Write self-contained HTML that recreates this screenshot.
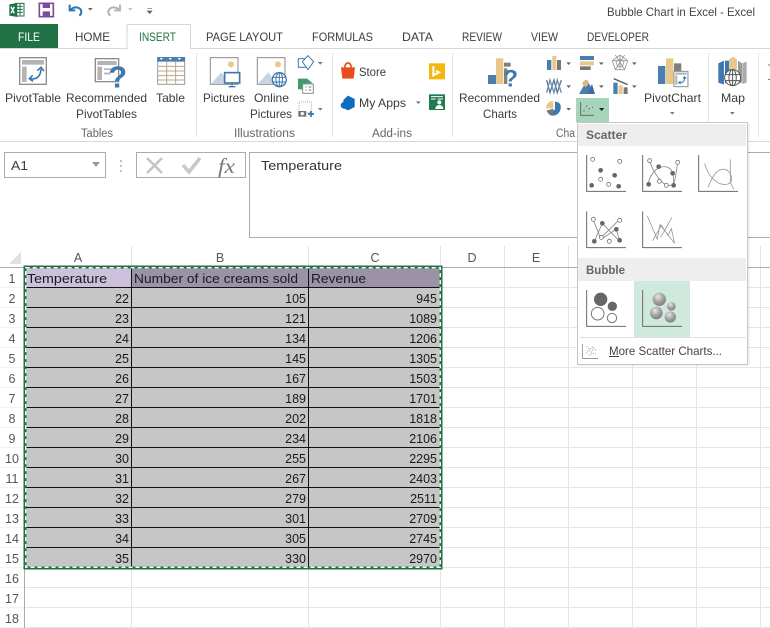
<!DOCTYPE html>
<html><head><meta charset="utf-8"><title>Bubble Chart in Excel - Excel</title>
<style>
html,body{margin:0;padding:0;background:#fff;width:770px;height:628px;overflow:hidden}
svg{display:block;font-family:"Liberation Sans",sans-serif;filter:blur(.3px)}
text{fill:#3c3c3c;font-size:12px}
.c text{fill:#1a1a1a;font-size:13px}
.c .n text{font-size:12.5px}
.h text{fill:#555;font-size:12.5px;text-anchor:middle}
.n text{text-anchor:end}
</style></head><body>
<svg width="770" height="628" viewBox="0 0 770 628" xmlns="http://www.w3.org/2000/svg">
<defs><radialGradient id="ball" cx=".4" cy=".3" r=".75"><stop offset="0" stop-color="#e6e6e6"/><stop offset=".55" stop-color="#a0a0a0"/><stop offset="1" stop-color="#7c7c7c"/></radialGradient></defs>
<rect width="770" height="628" fill="#fff"/>

<!-- QAT -->
<g transform="scale(.3333)">
<path d="M46 10h26v38H46z" fill="#fff" stroke="#1f7346" stroke-width="3"/>
<path d="M52 19h16M52 28h16M52 37h16M60 12v34" stroke="#1f7346" stroke-width="3"/>
<path d="M28 13l24-4v42l-24-4z" fill="#1f7346"/>
<path d="M33 20l10 20M43 20L33 40" stroke="#fff" stroke-width="4"/>
<path d="M118 10h42v40h-42z" fill="none" stroke="#7c4b9c" stroke-width="5"/>
<path d="M128 10h22v14h-22zM128 34h22v16h-22z" fill="#7c4b9c"/>
<path d="M209 14v17h17" fill="none" stroke="#2e75b6" stroke-width="6"/>
<path d="M212 30c8-12 32-10 32 6 0 4-2 8-6 11" fill="none" stroke="#2e75b6" stroke-width="6"/>
<path d="M264 24h14l-7 8z" fill="#666"/>
<path d="M360 14v17h-17" fill="none" stroke="#b4b4b4" stroke-width="6"/>
<path d="M357 30c-8-12-32-10-32 6 0 4 2 8 6 11" fill="none" stroke="#b4b4b4" stroke-width="6"/>
<path d="M384 24h14l-7 8z" fill="#c4c4c4"/>
<path d="M442 26h14M442 33h14l-7 8z" fill="#666" stroke="#666" stroke-width="2"/>
</g>
<text x="607" y="16" textLength="148" lengthAdjust="spacingAndGlyphs" style="font-size:12px;fill:#444">Bubble Chart in Excel - Excel</text>

<!-- tabs -->
<rect x="0" y="24" width="58" height="25" fill="#217346"/>
<path d="M0 48.500H127M190 48.500H770" stroke="#d6d6d6"/>
<path d="M127 49V24.500H190.500V49" fill="#fff" stroke="#d6d6d6"/>
<g>
<text x="18" y="41" textLength="22" lengthAdjust="spacingAndGlyphs" style="fill:#fff">FILE</text>
<text x="75" y="41" textLength="35" lengthAdjust="spacingAndGlyphs">HOME</text>
<text x="139" y="41" textLength="37" lengthAdjust="spacingAndGlyphs" style="fill:#217346">INSERT</text>
<text x="206" y="41" textLength="77" lengthAdjust="spacingAndGlyphs">PAGE LAYOUT</text>
<text x="312" y="41" textLength="61" lengthAdjust="spacingAndGlyphs">FORMULAS</text>
<text x="402" y="41" textLength="31" lengthAdjust="spacingAndGlyphs">DATA</text>
<text x="462" y="41" textLength="40" lengthAdjust="spacingAndGlyphs">REVIEW</text>
<text x="531" y="41" textLength="27" lengthAdjust="spacingAndGlyphs">VIEW</text>
<text x="587" y="41" textLength="62" lengthAdjust="spacingAndGlyphs">DEVELOPER</text>
</g>

<!-- ribbon -->
<path d="M0 141.500H770" stroke="#d8d8d8"/>
<path d="M196.500 53V137M332.500 53V137M452.500 53V137M708.500 53V137M758.500 53V137" stroke="#e4e4e4"/>
<rect x="576" y="98" width="33" height="24" fill="#a6d5bc"/>

<text x="5" y="102" textLength="56" lengthAdjust="spacingAndGlyphs">PivotTable</text>
<text x="66" y="102" textLength="81" lengthAdjust="spacingAndGlyphs">Recommended</text>
<text x="76" y="118" textLength="61" lengthAdjust="spacingAndGlyphs">PivotTables</text>
<text x="156" y="102" textLength="29" lengthAdjust="spacingAndGlyphs">Table</text>
<text x="203" y="102" textLength="42" lengthAdjust="spacingAndGlyphs">Pictures</text>
<text x="254" y="102" textLength="35" lengthAdjust="spacingAndGlyphs">Online</text>
<text x="250" y="118" textLength="42" lengthAdjust="spacingAndGlyphs">Pictures</text>
<text x="359" y="76" textLength="27" lengthAdjust="spacingAndGlyphs">Store</text>
<text x="359" y="107" textLength="47" lengthAdjust="spacingAndGlyphs">My Apps</text>
<text x="459" y="102" textLength="81" lengthAdjust="spacingAndGlyphs">Recommended</text>
<text x="483" y="118" textLength="34" lengthAdjust="spacingAndGlyphs">Charts</text>
<text x="644" y="102" textLength="57" lengthAdjust="spacingAndGlyphs">PivotChart</text>
<text x="721" y="102" textLength="24" lengthAdjust="spacingAndGlyphs">Map</text>
<text x="81" y="137" textLength="32" lengthAdjust="spacingAndGlyphs" style="fill:#666;font-size:11.500px">Tables</text>
<text x="234" y="137" textLength="61" lengthAdjust="spacingAndGlyphs" style="fill:#666;font-size:11.500px">Illustrations</text>
<text x="372" y="137" textLength="40" lengthAdjust="spacingAndGlyphs" style="fill:#666;font-size:11.500px">Add-ins</text>
<text x="556" y="137" textLength="19" lengthAdjust="spacingAndGlyphs" style="fill:#666;font-size:11.500px">Cha</text>

<!-- left ribbon icons -->
<g transform="scale(.3333)">
<rect x="59" y="173" width="80" height="80" fill="#fff" stroke="#8c8c8c" stroke-width="4"/>
<path d="M66 180h66v14H66zM66 200h14v46H66z" fill="#b4b4b4"/>
<path d="M90 236c20 4 32-8 33-28" fill="none" stroke="#3f78b0" stroke-width="5"/>
<path d="M112 212l11-10 9 11M98 226l-10 10 11 8" fill="none" stroke="#3f78b0" stroke-width="5"/>
<rect x="286" y="176" width="70" height="69" fill="#fff" stroke="#8c8c8c" stroke-width="4"/>
<path d="M292 183h58v12h-58zM292 200h14v40h-14zM312 205h30v5h-30zM312 218h20v5h-20z" fill="#b4b4b4"/>
<text x="325" y="262" style="font-size:92px;font-weight:bold;fill:#3f78b0">?</text>
<rect x="473" y="173" width="81" height="80" fill="#fff" stroke="#9a9a9a" stroke-width="3"/>
<rect x="472" y="171" width="83" height="14" fill="#4a7db0"/>
<path d="M473 199h81M473 213h81M473 227h81M473 240h81M500 185v68M527 185v68" stroke="#b8a88c" stroke-width="3"/>
<path d="M479 174h10l-5 6zM506 174h10l-5 6zM533 174h10l-5 6z" fill="#fff"/>

<rect x="631" y="173" width="83" height="80" fill="#fff" stroke="#8c8c8c" stroke-width="3"/>
<path d="M634 251l30-34 24 34z" fill="#c5d3e3"/>
<circle cx="693" cy="193" r="9" fill="#e8c88a"/>
<rect x="674" y="218" width="45" height="31" fill="#fff" stroke="#3f78b0" stroke-width="5"/>
<path d="M696 249v8M686 260h20" stroke="#3f78b0" stroke-width="4"/>
<rect x="772" y="173" width="83" height="80" fill="#fff" stroke="#8c8c8c" stroke-width="3"/>
<path d="M775 251l30-34 24 34z" fill="#c5d3e3"/>
<circle cx="834" cy="193" r="9" fill="#e8c88a"/>
<circle cx="838" cy="239" r="21" fill="#fff" stroke="#3f78b0" stroke-width="4"/>
<ellipse cx="838" cy="239" rx="10" ry="21" fill="none" stroke="#3f78b0" stroke-width="3"/>
<path d="M818 232h40M818 246h40M838 218v42" stroke="#3f78b0" stroke-width="3"/>
<rect x="895" y="176" width="28" height="26" fill="#fff" stroke="#3f78b0" stroke-width="3"/>
<path d="M924 167l17 18-17 24-17-24z" fill="#fff" stroke="#3f78b0" stroke-width="3"/>
<path d="M954 186h14l-7 8z" fill="#777"/>
<path d="M894 236h28l16 14h-20v18h-24z" fill="#3f9a6e"/>
<rect x="908" y="252" width="32" height="28" fill="#fff" stroke="#8c8c8c" stroke-width="3"/>
<path d="M916 261h4M926 261h8M916 270h4M926 270h8" stroke="#777" stroke-width="3"/>
<rect x="897" y="306" width="37" height="32" fill="#fff" stroke="#aaa" stroke-width="3" stroke-dasharray="3 3"/>
<rect x="895" y="333" width="24" height="17" fill="#777"/><circle cx="907" cy="341" r="5" fill="#fff"/>
<path d="M924 342h18M933 333v18" stroke="#2e75b6" stroke-width="5"/>
<path d="M954 324h14l-7 8z" fill="#777"/>
</g>

<!-- right ribbon icons -->
<g transform="translate(330,0) scale(.3333)">
<path d="M33 202h42l-4 34H37z" fill="#e84e1c"/>
<path d="M44 204c0-20 20-20 20 0" fill="none" stroke="#e84e1c" stroke-width="5"/>
<rect x="297" y="190" width="48" height="48" fill="#f5b70f"/>
<path d="M310 198v28l17-9-9-5" fill="none" stroke="#fff" stroke-width="6"/>
<path d="M54 287l20 10v24l-20 10-14-7v-24z" fill="#0f6cc0"/>
<circle cx="42" cy="316" r="10" fill="#0f6cc0"/>
<path d="M258 304h14l-7 8z" fill="#777"/>
<rect x="297" y="283" width="48" height="47" fill="#1f7c50"/>
<path d="M303 290h36M303 297h14M323 297h16" stroke="#fff" stroke-width="3"/>
<circle cx="328" cy="307" r="6" fill="#fff"/><path d="M316 327c0-16 24-16 24 0z" fill="#fff"/>

<rect x="474" y="225" width="24" height="27" fill="#4a7db0"/>
<rect x="498" y="175" width="22" height="77" fill="#e8c88a"/>
<rect x="522" y="188" width="20" height="12" fill="#808080"/>
<rect x="522" y="205" width="10" height="47" fill="#808080"/>
<text x="520" y="260" style="font-size:72px;font-weight:bold;fill:#3f78b0">?</text>

<path d="M651 180h13v30h-13z" fill="#4a7db0"/><path d="M667 168h12v42h-12z" fill="#e8c88a"/><path d="M681 180h12v30h-12z" fill="#777"/>
<path d="M709 187h14l-7 8z" fill="#666"/>
<path d="M750 168h42v12h-42z" fill="#4a7db0"/><path d="M750 184h42v12h-42z" fill="#e8c88a"/><path d="M750 199h32v11h-32z" fill="#777"/>
<path d="M807 187h14l-7 8z" fill="#666"/>
<path d="M870 165l23 17-9 27h-28l-9-27zM870 176l12 9-5 15h-14l-5-15zM870 165v44M847 182l46 0M856 209l28-44M884 209l-28-44" fill="none" stroke="#999" stroke-width="2.500"/>
<path d="M906 187h14l-7 8z" fill="#666"/>
<path d="M650 240l10 38 12-38 10 38 12-38" fill="none" stroke="#4a7db0" stroke-width="4"/>
<path d="M650 278l10-38 12 38 10-38 12 38" fill="none" stroke="#7a8a9a" stroke-width="4"/>
<path d="M709 256h14l-7 8z" fill="#666"/>
<path d="M747 282l24-42 24 42z" fill="#4a7db0"/><path d="M755 250l12-12 10 12-10 12z" fill="#e0b878"/><path d="M772 282l14-30 9 30z" fill="#3f6e9c"/>
<path d="M807 256h14l-7 8z" fill="#666"/>
<rect x="850" y="248" width="13" height="34" fill="#4a7db0"/><rect x="866" y="256" width="12" height="26" fill="#e8c88a"/><rect x="881" y="262" width="12" height="20" fill="#777"/>
<path d="M851 236l42 18" stroke="#555" stroke-width="4"/>
<path d="M906 256h14l-7 8z" fill="#666"/>
<path d="M670 303v22h-22c0-13 9-22 22-22z" fill="#e8c88a"/>
<path d="M675 305c28 0 20 42-6 42-8 0-14-4-15-10l21-8z" fill="#3f78b0"/>
<path d="M650 332l20-6v18c-10 0-18-4-20-12z" fill="#777"/>
<path d="M709 324h14l-7 8z" fill="#666"/>
<path d="M752 306v40h40" fill="none" stroke="#6a6a6a" stroke-width="3"/>
<path d="M760 332h4M768 318h4M776 326h4M786 322h3" stroke="#3f78b0" stroke-width="4"/>
<path d="M764 324h4M772 336h4" stroke="#c8a860" stroke-width="4"/>
<path d="M807 324h16l-8 9z" fill="#222"/>

<rect x="984" y="198" width="22" height="54" fill="#4a7db0"/>
<rect x="1008" y="175" width="22" height="77" fill="#e8c88a"/>
<rect x="1032" y="190" width="22" height="24" fill="#808080"/>
<rect x="1032" y="214" width="42" height="46" fill="#fff" stroke="#8c8c8c" stroke-width="3"/>
<path d="M1036 218h34v6h-34zM1036 226h6v28h-6z" fill="#b4b4b4"/>
<path d="M1048 248c12 2 16-6 16-16M1059 236l5-6 5 6M1052 244l-6 4 6 4" fill="none" stroke="#3f78b0" stroke-width="3"/>
<path d="M1020 336h14l-7 8z" fill="#777"/>
<path d="M1165 190l17-8v72l-17-6z" fill="#3f78b0"/>
<path d="M1185 182h14v68h-14z" fill="#3f78b0"/>
<path d="M1197 178l12-8 12 8v30h-24z" fill="#e8c88a"/>
<path d="M1224 182l12 8v58l-12 4z" fill="#999"/><path d="M1237 190l13-6v64l-13 4z" fill="#aaa"/>
<circle cx="1208" cy="233" r="24" fill="#fff" stroke="#555" stroke-width="3"/>
<ellipse cx="1208" cy="233" rx="11" ry="24" fill="none" stroke="#555" stroke-width="3"/>
<path d="M1186 224h44M1186 242h44M1208 209v48" stroke="#555" stroke-width="3"/>
<path d="M1200 336h14l-7 8z" fill="#777"/>
<path d="M1315 195h5M1315 238h5" stroke="#555" stroke-width="3"/>
</g>

<!-- formula bar -->
<rect x="4.500" y="152.500" width="101" height="25" fill="#fff" stroke="#ababab"/>
<text x="11" y="170" textLength="17" lengthAdjust="spacingAndGlyphs" style="font-size:12.500px">A1</text>
<path d="M92 162h8l-4 5z" fill="#999"/>
<path d="M120 160h2v2h-2zM120 165h2v2h-2zM120 170h2v2h-2z" fill="#c4c4c4"/>
<rect x="136.500" y="152.500" width="109" height="25" fill="#fff" stroke="#ababab"/>
<path d="M147 158l15 15M162 158l-15 15" stroke="#c4c4c4" stroke-width="2.500"/>
<path d="M183 165l6 7 11-14" fill="none" stroke="#c8c8c8" stroke-width="3.500"/>
<text x="218" y="173" textLength="17" lengthAdjust="spacingAndGlyphs" style="font-family:'Liberation Serif',serif;font-size:21px;font-style:italic;fill:#777">fx</text>
<path d="M770 152.500H249.500V237.500H770" fill="#fff" stroke="#ababab"/>
<text x="261" y="170" textLength="81" lengthAdjust="spacingAndGlyphs" style="font-size:13px;fill:#333">Temperature</text>

<!-- grid -->
<g stroke="#e4e4e4">
<path d="M504.500 268V628M568.500 268V628M632.500 268V628M696.500 268V628M760.500 268V628M131.500 568V628M308.500 568V628M440.500 568V628"/>
<path d="M441 287.500H770M441 307.500H770M441 327.500H770M441 347.500H770M441 367.500H770M441 387.500H770M441 407.500H770M441 427.500H770M441 447.500H770M441 467.500H770M441 487.500H770M441 507.500H770M441 527.500H770M441 547.500H770M25 587.500H770M25 607.500H770M25 627.500H770M441 567.500H770"/>
<path d="M131.500 246V267M308.500 246V267M440.500 246V267M504.500 246V267M568.500 246V267M632.500 246V267M696.500 246V267M760.500 246V267"/>
</g>
<path d="M0 287.500H24M0 307.500H24M0 327.500H24M0 347.500H24M0 367.500H24M0 387.500H24M0 407.500H24M0 427.500H24M0 447.500H24M0 467.500H24M0 487.500H24M0 507.500H24M0 527.500H24M0 547.500H24M0 567.500H24M0 587.500H24M0 607.500H24M0 627.500H24" stroke="#f2f2f2"/>
<path d="M24.500 268V628M0 267.500H770" stroke="#ababab"/>
<path d="M21 252v12H9z" fill="#e0e0e0"/>
<g class="h">
<text x="78" y="262">A</text><text x="220" y="262">B</text><text x="375" y="262">C</text><text x="472" y="262">D</text><text x="536" y="262">E</text>
<text x="12" y="283">1</text><text x="12" y="303">2</text><text x="12" y="323">3</text><text x="12" y="343">4</text><text x="12" y="363">5</text><text x="12" y="383">6</text><text x="12" y="403">7</text><text x="12" y="423">8</text><text x="12" y="443">9</text><text x="12" y="463">10</text><text x="12" y="483">11</text><text x="12" y="503">12</text><text x="12" y="523">13</text><text x="12" y="543">14</text><text x="12" y="563">15</text><text x="12" y="583">16</text><text x="12" y="603">17</text><text x="12" y="623">18</text>
</g>

<!-- cells -->
<rect x="25" y="268" width="416" height="300" fill="#c6c6c6"/>
<rect x="25" y="268" width="107" height="20" fill="#cbc1dc"/>
<rect x="132" y="268" width="309" height="20" fill="#9c92a8"/>
<path d="M131.500 268V568M308.500 268V568M25 287.500H441M25 307.500H441M25 327.500H441M25 347.500H441M25 367.500H441M25 387.500H441M25 407.500H441M25 427.500H441M25 447.500H441M25 467.500H441M25 487.500H441M25 507.500H441M25 527.500H441M25 547.500H441" stroke="#111"/>
<g class="c">
<text x="27" y="283" textLength="80" lengthAdjust="spacingAndGlyphs">Temperature</text>
<text x="134" y="283" textLength="164" lengthAdjust="spacingAndGlyphs">Number of ice creams sold</text>
<text x="311" y="283" textLength="55" lengthAdjust="spacingAndGlyphs">Revenue</text>
<g class="n">
<text x="129" y="303">22</text><text x="306" y="303">105</text><text x="437" y="303">945</text>
<text x="129" y="323">23</text><text x="306" y="323">121</text><text x="437" y="323">1089</text>
<text x="129" y="343">24</text><text x="306" y="343">134</text><text x="437" y="343">1206</text>
<text x="129" y="363">25</text><text x="306" y="363">145</text><text x="437" y="363">1305</text>
<text x="129" y="383">26</text><text x="306" y="383">167</text><text x="437" y="383">1503</text>
<text x="129" y="403">27</text><text x="306" y="403">189</text><text x="437" y="403">1701</text>
<text x="129" y="423">28</text><text x="306" y="423">202</text><text x="437" y="423">1818</text>
<text x="129" y="443">29</text><text x="306" y="443">234</text><text x="437" y="443">2106</text>
<text x="129" y="463">30</text><text x="306" y="463">255</text><text x="437" y="463">2295</text>
<text x="129" y="483">31</text><text x="306" y="483">267</text><text x="437" y="483">2403</text>
<text x="129" y="503">32</text><text x="306" y="503">279</text><text x="437" y="503">2511</text>
<text x="129" y="523">33</text><text x="306" y="523">301</text><text x="437" y="523">2709</text>
<text x="129" y="543">34</text><text x="306" y="543">305</text><text x="437" y="543">2745</text>
<text x="129" y="563">35</text><text x="306" y="563">330</text><text x="437" y="563">2970</text>
</g>
</g>
<!-- marquee -->
<rect x="25" y="267" width="416" height="301" fill="none" stroke="#217346" stroke-width="3"/>
<rect x="25.700" y="267.700" width="414.600" height="299.600" fill="none" stroke="#fff" stroke-width="1.400" stroke-dasharray="4 3"/>

<!-- dropdown -->
<rect x="578" y="123" width="172" height="243" fill="#000" opacity=".05"/>
<rect x="577.500" y="122.500" width="170" height="242" fill="#fff" stroke="#c6c6c6"/>
<rect x="578" y="124" width="168" height="22" fill="#eeeeee"/>
<rect x="578" y="258" width="168" height="23" fill="#eeeeee"/>
<rect x="634" y="281" width="56" height="56" fill="#cfeadd"/>
<path d="M580 337.500H746" stroke="#e0e0e0"/>
<text x="586" y="139" textLength="41" lengthAdjust="spacingAndGlyphs" style="font-weight:bold;fill:#666;font-size:12px">Scatter</text>
<text x="586" y="274" textLength="39" lengthAdjust="spacingAndGlyphs" style="font-weight:bold;fill:#666;font-size:12px">Bubble</text>
<text x="609" y="355" textLength="113" lengthAdjust="spacingAndGlyphs" style="font-size:12px;fill:#444">More Scatter Charts...</text>
<path d="M609 356.500h10" stroke="#444"/>
<g transform="translate(570,120) scale(.3333)">
<g fill="none" stroke="#6a6a6a" stroke-width="3">
<path d="M50 105v109h118M218 105v109h118M386 105v109h118M50 274v109h118M218 274v109h118M50 510v109h118M218 510v109h118"/>
</g>
<g fill="#666"><circle cx="65" cy="196" r="7"/><circle cx="92" cy="151" r="7"/><circle cx="134" cy="166" r="7"/><circle cx="146" cy="199" r="7"/></g>
<g fill="#fff" stroke="#777" stroke-width="2.500"><circle cx="68" cy="118" r="6"/><circle cx="149" cy="124" r="6"/><circle cx="92" cy="178" r="6"/><circle cx="116" cy="193" r="6"/></g>
<path d="M235 193c4-36 36-62 60-50 16 8 16 30 16 50" fill="none" stroke="#888" stroke-width="2.500"/>
<path d="M239 122c8 30 30 62 50 74h20c10-20 10-50 14-68" fill="none" stroke="#888" stroke-width="2.500"/>
<g fill="#666"><circle cx="236" cy="193" r="7"/><circle cx="266" cy="140" r="7"/><circle cx="308" cy="160" r="7"/><circle cx="311" cy="196" r="7"/></g>
<g fill="#fff" stroke="#777" stroke-width="2.500"><circle cx="239" cy="122" r="6"/><circle cx="323" cy="127" r="6"/><circle cx="268" cy="184" r="6"/><circle cx="289" cy="196" r="6"/></g>
<path d="M404 130c10 40 40 70 70 62 20-6 10-40-10-44-26-4-40 30-50 54M481 118v60c0 14 8 24 10 30" fill="none" stroke="#999" stroke-width="2.500"/>
<path d="M73 364l24-54 52 54-10-36-46 30-24-60" fill="none" stroke="#888" stroke-width="2.500"/>
<path d="M94 352l55-54" fill="none" stroke="#888" stroke-width="2.500"/>
<g fill="#666"><circle cx="73" cy="364" r="7"/><circle cx="97" cy="310" r="7"/><circle cx="139" cy="328" r="7"/><circle cx="149" cy="361" r="7"/></g>
<g fill="#fff" stroke="#777" stroke-width="2.500"><circle cx="70" cy="298" r="6"/><circle cx="149" cy="301" r="6"/><circle cx="94" cy="352" r="6"/><circle cx="118" cy="364" r="6"/></g>
<path d="M232 288l30 70 8-44 44 56-10-44-10 20-20-30-26 46M306 292l-34 60" fill="none" stroke="#999" stroke-width="2.500"/>
<circle cx="92" cy="538" r="20" fill="#666"/><circle cx="127" cy="559" r="14" fill="#666"/>
<circle cx="83" cy="581" r="19" fill="#fff" stroke="#777" stroke-width="3"/><circle cx="126" cy="594" r="14" fill="#fff" stroke="#777" stroke-width="3"/>
<g fill="url(#ball)"><circle cx="268" cy="538" r="20"/><circle cx="304" cy="559" r="13"/><circle cx="259" cy="579" r="19"/><circle cx="301" cy="591" r="17"/></g>
<path d="M38 672v44h46" fill="none" stroke="#777" stroke-width="2"/>
<path d="M48 700l8-10 8 6 8-12 6 8M50 680l10 8 10-10M56 706l12-6 10 2" fill="none" stroke="#999" stroke-width="3" stroke-dasharray="3 4"/>
</g>
</svg>
</body></html>
